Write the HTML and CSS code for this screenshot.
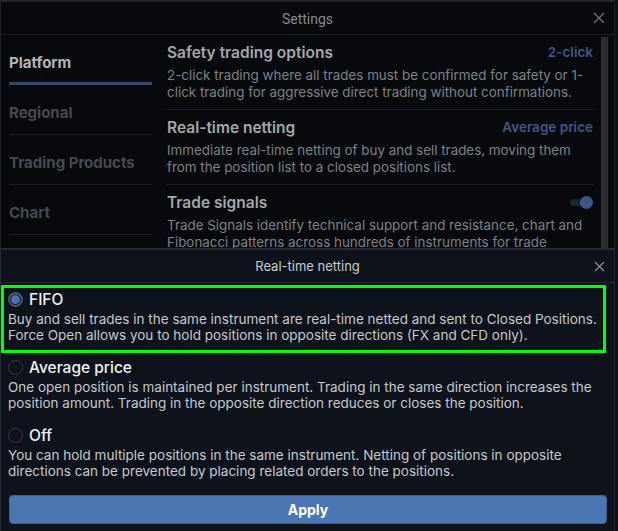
FILE: index.html
```html
<!DOCTYPE html>
<html>
<head>
<meta charset="utf-8">
<link rel="stylesheet" href="styles.css">
</head>
<body>
<div class="screen">
  <div class="settings">
    <div class="s-header">
      <span class="s-title">Settings</span>
      <svg class="s-close" width="12" height="12" viewBox="0 0 12 12"><path d="M1 1L11 11M11 1L1 11" stroke="#6f747b" stroke-width="1.3" fill="none"/></svg>
    </div>
    <div class="s-body">
      <nav class="nav">
        <div class="nav-item active">Platform</div>
        <div class="nav-item">Regional</div>
        <div class="nav-item">Trading Products</div>
        <div class="nav-item">Chart</div>
      </nav>
      <div class="content">
        <div class="sec">
          <div class="sec-head"><span class="sec-title">Safety trading options</span><span class="sec-val">2-click</span></div>
          <div class="sec-desc">2-click trading where all trades must be confirmed for safety or 1-<br>click trading for aggressive direct trading without confirmations.</div>
        </div>
        <div class="sec">
          <div class="sec-head"><span class="sec-title">Real-time netting</span><span class="sec-val">Average price</span></div>
          <div class="sec-desc">Immediate real-time netting of buy and sell trades, moving them<br>from the position list to a closed positions list.</div>
        </div>
        <div class="sec last">
          <div class="sec-head"><span class="sec-title">Trade signals</span><span class="toggle"><span class="knob"></span></span></div>
          <div class="sec-desc">Trade Signals identify technical support and resistance, chart and<br>Fibonacci patterns across hundreds of instruments for trade</div>
        </div>
      </div>
      <div class="scrollbar"></div>
    </div>
  </div>

  <div class="sheet">
    <div class="sh-header">
      <span class="sh-title">Real-time netting</span>
      <svg class="sh-close" width="11" height="11" viewBox="0 0 11 11"><path d="M1 1L10 10M10 1L1 10" stroke="#8a8f96" stroke-width="1.3" fill="none"/></svg>
    </div>
    <div class="options">
      <div class="opt selected">
        <div class="opt-head"><span class="radio on"></span><span class="opt-name">FIFO</span></div>
        <div class="opt-desc">Buy and sell trades in the same instrument are real-time netted and sent to Closed Positions.<br>Force Open allows you to hold positions in opposite directions (FX and CFD only).</div>
      </div>
      <div class="opt">
        <div class="opt-head"><span class="radio"></span><span class="opt-name">Average price</span></div>
        <div class="opt-desc">One open position is maintained per instrument. Trading in the same direction increases the<br>position amount. Trading in the opposite direction reduces or closes the position.</div>
      </div>
      <div class="opt">
        <div class="opt-head"><span class="radio"></span><span class="opt-name">Off</span></div>
        <div class="opt-desc">You can hold multiple positions in the same instrument. Netting of positions in opposite<br>directions can be prevented by placing related orders to the positions.</div>
      </div>
    </div>
    <button class="apply">Apply</button>
  </div>
</div>
</body>
</html>
```

FILE: styles.css
```css
* { box-sizing: border-box; }
html, body { margin: 0; padding: 0; }
body {
  background: #0c0f14;
  font-family: Inter, "Noto Sans", sans-serif;
  width: 618px;
  height: 531px;
  overflow: hidden;
}
.screen {
  position: relative;
  width: 615px;
  height: 531px;
  border-top: 2px solid #22262c;
  padding-top: 1px;
  background: #0a0c10;
}
.settings {
  height: 528px;
  background: #07090d;
  border-left: 1px solid #1c2027;
  border-right: 1px solid #1c2027;
  display: flex;
  flex-direction: column;
}
.s-header {
  height: 32px;
  border-bottom: 1px solid #1a1e25;
  display: flex;
  align-items: center;
  justify-content: center;
  position: relative;
}
.s-title {
  color: #868b92;
  font-size: 14px;
  font-family: Roboto, Inter, sans-serif;
}
.s-close {
  position: absolute;
  right: 9px;
  top: 9px;
}
.s-body {
  display: flex;
  flex: 1;
}
.nav {
  width: 143px;
  margin-left: 8px;
  flex: none;
}
.nav-item {
  height: 50px;
  padding-top: 19px;
  line-height: 18px;
  font-size: 15px;
  font-weight: 700;
  color: #464a50;
  border-bottom: 1px solid #1c2026;
}
.nav-item.active {
  color: #b2b5b9;
  border-bottom: 3px solid #34496a;
  height: 50px;
}
.content {
  width: 426px;
  margin-left: 15px;
  flex: none;
}
.sec {
  padding: 7px 0 8px;
  border-bottom: 1px solid #1c2026;
}
.sec.last { border-bottom: none; }
.sec-head {
  display: flex;
  justify-content: space-between;
  align-items: center;
  height: 20px;
  margin-bottom: 5px;
}
.sec-title {
  font-size: 15.5px;
  font-weight: 600;
  color: #a4a7ab;
}
.sec-val {
  font-size: 13.5px;
  font-weight: 600;
  color: #3e5885;
}
.sec-desc {
  font-size: 13.4px;
  line-height: 17px;
  color: #7d8187;
  white-space: nowrap;
}
.toggle {
  position: relative;
  width: 22px;
  height: 7px;
  border-radius: 4px;
  background: #1b2535;
  margin-right: 1px;
}
.knob {
  position: absolute;
  right: -1px;
  top: -3px;
  width: 13px;
  height: 13px;
  border-radius: 50%;
  background: #3b5886;
}
.scrollbar {
  width: 7px;
  margin-left: 8px;
  margin-top: 2px;
  background: #2b2d31;
}

.sheet {
  position: absolute;
  left: 0;
  top: 246px;
  width: 615px;
  bottom: 0;
  background: #0e131b;
  border-top: 2px solid #272b33;
  border-left: 1px solid #262b33;
  border-right: 1px solid #262b33;
  display: flex;
  flex-direction: column;
}
.sh-header {
  height: 33px;
  border-bottom: 1px solid #232831;
  display: flex;
  align-items: center;
  justify-content: center;
  position: relative;
}
.sh-title {
  color: #c8cbcf;
  font-size: 13px;
}
.sh-close {
  position: absolute;
  right: 9px;
  top: 11px;
}
.options {
  margin-top: 2px;
}
.opt {
  border: 3px solid transparent;
  padding: 1px 5px 7px 4px;
  margin-right: 8px;
}
.opt.selected {
  border-color: #00ff00;
}
.opt-head {
  display: flex;
  align-items: center;
  height: 20px;
  margin-bottom: 2px;
}
.radio {
  width: 15px;
  height: 15px;
  border-radius: 50%;
  border: 1.5px solid #353a42;
  margin-right: 6px;
  flex: none;
}
.radio.on {
  border: 2px solid #4b5566;
  background: #4a73b3;
  box-shadow: inset 0 0 0 1px #0e131b;
}
.opt-name {
  font-size: 15.5px;
  font-weight: 500;
  color: #f0f1f2;
}
.opt-desc {
  font-size: 13.5px;
  line-height: 16px;
  color: #c5c8cc;
  white-space: nowrap;
}
.apply {
  margin: 6px 7px 0 8px;
  height: 29px;
  border: 1px solid #3d659c;
  border-radius: 4px;
  background: #4a76b1;
  color: #ffffff;
  font-family: Inter, sans-serif;
  font-size: 14px;
  font-weight: 700;
  padding: 0;
}
```
